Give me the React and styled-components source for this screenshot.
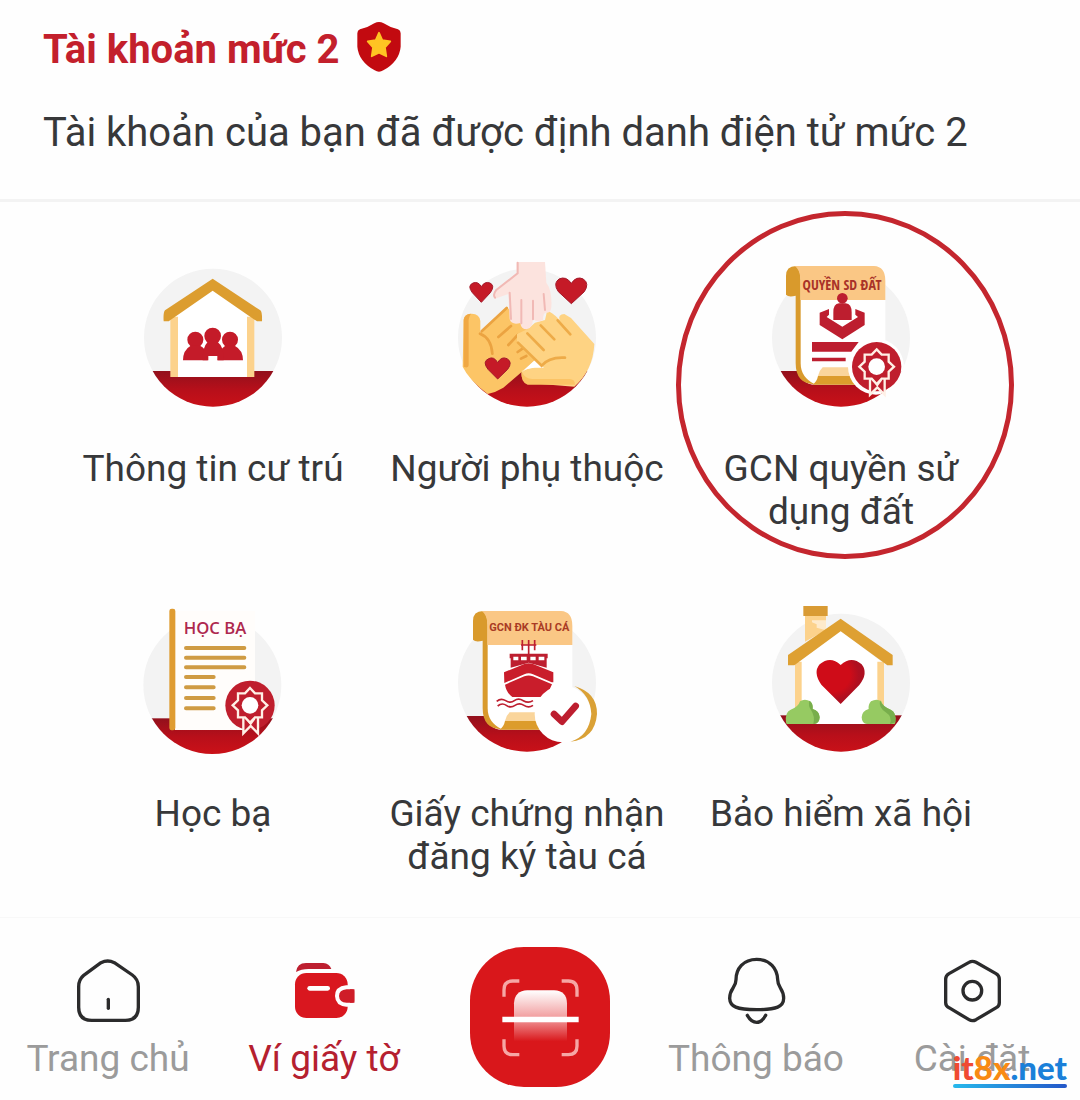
import styled, { createGlobalStyle } from 'styled-components';

const GlobalStyle = createGlobalStyle`
  * {
    box-sizing: border-box;
  }

  body {
    margin: 0;
    background: #fefefe;
    color: #37383a;
    font-family: Roboto, 'Noto Sans', sans-serif;
  }
`;

const Page = styled.div`
  display: flex;
  flex-direction: column;
  overflow: hidden;
`;

const Header = styled.header`
  padding: 22px 43px 42px;
  border-bottom: 3px solid #f3f3f3;
`;

const TitleRow = styled.div`
  display: flex;
  align-items: flex-start;
  gap: 16px;
`;

const Title = styled.h1`
  margin: 0;
  font-weight: 700;
  font-size: 40px;
  line-height: 55px;
  color: #c3202c;
`;

const ShieldIcon = styled.svg`
  width: 46px;
  height: 50px;
`;

const Subtitle = styled.p`
  margin: 32px 0 0;
  font-size: 40px;
  line-height: 48px;
`;

const DocumentGrid = styled.main`
  display: grid;
  grid-template-columns: repeat(3, 1fr);
  row-gap: 62px;
  padding: 48px 82px 39px 56px;
`;

const DocumentLink = styled.a`
  position: relative;
  display: flex;
  flex-direction: column;
  align-items: center;
  gap: 27px;
  min-height: 283px;
  color: inherit;
  text-decoration: none;
`;

const Artwork = styled.svg`
  width: 170px;
  height: 170px;
`;

const DocumentLabel = styled.span`
  max-width: 290px;
  font-size: 37px;
  line-height: 43px;
  text-align: center;
`;

const Highlight = styled.span`
  position: absolute;
  top: -39px;
  left: 50%;
  width: 338px;
  height: 348px;
  margin-left: -165px;
  border: 5px solid #c4262e;
  border-radius: 50%;
  pointer-events: none;
`;

const TabBar = styled.nav`
  position: relative;
  display: grid;
  grid-template-columns: repeat(5, 1fr);
  padding: 29px 0 12px;
  border-top: 1px solid #f8f8f8;
`;

const Tab = styled.a`
  display: flex;
  flex-direction: column;
  align-items: center;
  gap: 10px;
  padding-top: 8px;
  font-size: 37px;
  line-height: 44px;
  color: ${({ $active }) => ($active ? '#b5202f' : '#9b9b9b')};
  text-decoration: none;
  white-space: nowrap;
`;

const TabIcon = styled.svg`
  width: 72px;
  height: 72px;
  fill: none;
  stroke: #2b2b2c;
  stroke-width: 10px;
  stroke-linecap: round;
  stroke-linejoin: round;
`;

const ScanButton = styled.button`
  justify-self: center;
  width: 140px;
  height: 140px;
  padding: 0;
  border: 0;
  border-radius: 54px;
  background: #d9171b;
  cursor: pointer;

  svg {
    display: block;
    width: 100%;
  }
`;

const SiteMark = styled.a`
  position: absolute;
  right: 13px;
  bottom: 11px;
  padding-bottom: 5px;
  font-family: Lato, 'Open Sans', sans-serif;
  font-weight: 900;
  font-size: 33px;
  line-height: 32px;
  color: #1a80d9;
  text-decoration: none;

  &::after {
    content: '';
    position: absolute;
    right: 0;
    bottom: 0;
    left: 0;
    height: 4px;
    border-radius: 2px;
    background: linear-gradient(90deg, #27b9ec, #2457c9);
  }
`;

const Tint = styled.span`
  color: ${({ $color }) => $color};
`;

const ArtText = styled.text`
  font-family: ${({ $family }) => $family};
  font-weight: ${({ $weight }) => $weight || 700};
  font-size: ${({ $size }) => $size}px;
  text-anchor: middle;
`;

const Disc = ({ id, cx = 248, cy = 263, ground = 363 }) => (
  <>
    <defs>
      <clipPath id={`${id}-disc`}>
        <circle cx={cx} cy={cy} r="207" />
      </clipPath>
      <linearGradient id={`${id}-ground`} x1="0" y1="0" x2="0" y2="1">
        <stop offset="0" stopColor="#92101c" />
        <stop offset=".5" stopColor="#b80f1a" />
        <stop offset="1" stopColor="#cc1118" />
      </linearGradient>
    </defs>
    <circle cx={cx} cy={cy} r="207" fill="#f3f3f3" />
    <rect
      x={cx - 210}
      y={ground}
      width="420"
      height={480 - ground}
      fill={`url(#${id}-ground)`}
      clipPath={`url(#${id}-disc)`}
    />
  </>
);

const Rosette = ({ cx, cy }) => (
  <g transform={`translate(${cx} ${cy})`}>
    <circle r="74" fill="#bf1e2d" />
    <g fill="none" stroke="#fff0e6" strokeWidth="7">
      <path fill="#bf1e2d" d="M-20 36V84L2 62 24 84V36" />
      <path strokeWidth="5" d="M-10 40 2 56 14 40" />
      <path
        fill="#bf1e2d"
        d="M0-52 15-36 36-36 36-15 52 0 36 15 36 36 15 36 0 52-15 36-36 36-36 15-52 0-36-15-36-36-15-36Z"
      />
    </g>
    <circle r="25" fill="#fff" />
  </g>
);

const Scroll = () => (
  <>
    <path
      fill="#fff"
      d="M124 70H375L390 104V404H180C150 404 128 384 128 344Z"
    />
    <path
      fill="#d99a2c"
      d="M92 134V78Q92 48 122 48Q136 60 136 90V340Q136 382 178 403Q121 402 121 340V137Q100 143 92 134Z"
    />
    <path fill="#fac785" d="M118 48H356Q390 50 390 92V150H135V88Q134 58 118 48Z" />
    <path fill="#fad59b" d="M202 352H310V378H188Q192 361 202 352Z" />
    <path fill="#dc9c2c" d="M188 378H310L326 404H172Q185 394 188 378Z" />
  </>
);

const ResidenceArt = () => (
  <Artwork viewBox="-7 0 510 510" aria-hidden="true">
    <Disc id="residence" />
    <path fill="#fff" d="M128 200 247 110 364 200V381H128Z" />
    <path fill="#fcd28c" d="M120 200H143V381H120ZM350 200H372V381H350Z" />
    <path
      fill="#dc9d2f"
      d="M247 86 390 181Q396 186 395 214H380L247 122 115 214H100Q98 188 104 181Z"
    />
    <g fill="#c41b29">
      <circle cx="195" cy="269" r="24" />
      <circle cx="299" cy="269" r="24" />
      <path d="M158 331Q158 300 181 287H209Q225 293 232 318V331ZM262 331Q264 300 285 287H313Q338 300 338 331Z" />
      <circle cx="247" cy="258" r="25" />
      <path d="M217 325Q218 290 232 276H262Q280 290 280 325V331H261V318H234V331H217Z" />
    </g>
  </Artwork>
);

const DependantsArt = () => (
  <Artwork viewBox="-9 0 510 510" aria-hidden="true">
    <Disc id="dependants" cx={246} />
    <path
      fill="#fcc566"
      d="M56 208Q58 191 80 191Q104 192 106 213V248L185 171 250 230 270 330 230 366 175 413Q154 426 128 432Q72 390 53 350Z"
    />
    <path fill="#f0a844" d="M56 350V210Q58 192 78 191Q69 204 71 222V346Q70 356 56 350Z" />
    <path
      fill="none"
      stroke="#eba341"
      strokeWidth="8"
      strokeLinecap="round"
      d="M105 251Q139 264 142 311M110 244 185 174M160 261 198 228M190 285 218 255M218 306 238 292M228 326 244 318"
    />
    <path
      fill="#fed383"
      d="M216 252 250 236 270 218 300 210 306 184Q318 183 344 210Q338 194 358 192L378 204 448 282Q444 362 388 410L242 398Q226 386 230 361L270 352 295 351 216 276Z"
    />
    <path fill="#fbc365" d="M230 365Q240 386 262 387H374Q390 388 390 404H248Q226 396 230 365Z" />
    <path fill="#fff" d="M231 366 268 332 297 353H268Q246 354 231 366Z" />
    <path
      fill="none"
      stroke="#eeab48"
      strokeWidth="8"
      strokeLinecap="round"
      d="M219 278 290 347Q312 320 360 323M247 250 296 300M287 226 328 268M338 211 376 253"
    />
    <path
      fill="#fce3de"
      d="M215 36H300L304 98Q322 122 319 171Q318 187 307 188Q294 185 294 210Q277 220 264 207Q263 235 245 238Q228 238 226 219Q200 226 194 208L190 132 150 146Q140 137 151 119L215 68Z"
    />
    <path
      fill="none"
      stroke="#f1b9b5"
      strokeWidth="6"
      strokeLinecap="round"
      d="M218 38V70L153 121Q143 134 150 143M194 128 198 207M229 150V220M264 152V208M296 132 300 180"
    />
    <g fill="#c51a27" stroke="#a3192a" strokeWidth="3">
      <path d="M109 157 82 128Q66 107 84 99 99 93 109 110 119 93 135 99 151 107 136 128Z" />
      <path d="M379 161 340 125Q323 100 342 87 363 77 379 100 394 77 415 87 434 101 418 125Z" />
      <path d="M158 387 129 358Q111 335 131 326 147 318 158 338 169 318 186 326 204 336 188 358Z" />
    </g>
  </Artwork>
);

const LandRightsArt = () => (
  <Artwork viewBox="2 0 510 510" aria-hidden="true">
    <Disc id="land" cx={257} />
    <Scroll />
    <ArtText x="260" y="119" fill="#a93228" $size={42} $family="'Liberation Sans Narrow', 'Open Sans Condensed', Roboto, sans-serif">
      QUYỀN SD ĐẤT
    </ArtText>
    <g fill="#bd1e2f">
      <path d="M193 188 221 177V194L214 201 261 230 308 201 300 194V177L328 188V225L261 268 193 225Z" />
      <path d="M234 210V187Q234 162 251 160H271Q289 162 289 187V210Z" />
      <circle cx="261" cy="145" r="16" />
      <path d="M170 276H310L288 305H170ZM170 323H271V334H170Z" />
    </g>
    <circle cx="362" cy="350" r="84" fill="#fff" clipPath="url(#land-disc)" />
    <Rosette cx={364} cy={350} />
  </Artwork>
);

const SchoolRecordArt = () => (
  <Artwork viewBox="-5 0 510 510" aria-hidden="true">
    <Disc id="school" cx={248} cy={270} ground={370} />
    <path fill="#fffdfb" d="M136 48H376V385L350 405H136Z" />
    <rect x="119" y="41" width="18" height="365" rx="7" fill="#df9c32" />
    <ArtText x="256" y="117" fill="#ae284e" $size={50} $weight={600} $family="'Open Sans', 'Noto Sans', sans-serif">
      HỌC BẠ
    </ArtText>
    <path
      stroke="#cf9b43"
      strokeWidth="12"
      strokeLinecap="round"
      d="M169 159H344M169 188H344M169 217H344M169 246H252M169 277H252M169 309H252M169 340H252"
    />
    <Rosette cx={361} cy={331} />
  </Artwork>
);

const ShipCertificateArt = () => (
  <Artwork viewBox="-9 0 510 510" aria-hidden="true">
    <Disc id="ship" cx={246} />
    <g transform="translate(-8 0)">
      <Scroll />
    </g>
    <ArtText x="253" y="107" fill="#a93b24" $size={33} $family="Roboto, sans-serif">
      GCN ĐK TÀU CÁ
    </ArtText>
    <g fill="none" stroke="#bd1e2f" strokeWidth="5">
      <path d="M232 135V166M251 135V180M269 135V166M228 150H274" />
      <path d="M155 319Q168 308 182 317T208 317 235 317 264 317M158 333Q171 322 184 331T210 331 237 331 264 331" />
    </g>
    <path fill="#bd1e2f" d="M194 176H308V190H305V218L251 203 197 218V190H194Z" />
    <path fill="#fff" d="M205 185H220V196H205ZM228 185H245V196H228ZM256 185H272V196H256ZM281 185H298V196H281Z" />
    <path
      fill="#c91d2b"
      d="M177 232 238 207Q251 203 264 207L325 232V262H320L264 238Q251 232 238 238L178 264ZM180 269 238 244Q251 239 264 244L321 268Q310 290 305 306H202Q184 293 180 269Z"
    />
    <circle cx="354" cy="357" r="85" fill="#fff" />
    <path
      fill="#daa136"
      d="M388 273Q457 293 456 357 450 432 376 440 432 424 439 357 436 300 388 273Z"
    />
    <path
      fill="none"
      stroke="#bd1e2f"
      strokeWidth="20"
      strokeLinecap="round"
      strokeLinejoin="round"
      d="M327 357 351 380 392 333"
    />
  </Artwork>
);

const InsuranceArt = () => (
  <Artwork viewBox="2 0 510 510" aria-hidden="true">
    <Disc id="insurance" cx={257} ground={361} />
    <defs>
      <radialGradient id="heart" cx=".32" cy=".35" r=".75">
        <stop offset=".5" stopColor="#cf0c18" />
        <stop offset=".75" stopColor="#ae0f20" />
      </radialGradient>
    </defs>
    <path fill="#fcd28c" d="M149 62H212V105L149 140Z" />
    <path fill="#feeacb" d="M170 76H212V106L184 98V88L170 82Z" />
    <path fill="#d99b34" d="M144 33H217V63H144Z" />
    <path fill="#fff" d="M130 200 256 106 378 200V387H130Z" />
    <path fill="#fcd28c" d="M119 200H139V350H119ZM366 200H386V350H366Z" />
    <path fill="#dea032" d="M256 71 412 180V211H396L256 109 117 211H98V180Z" />
    <path
      fill="url(#heart)"
      d="M256 327 198 269Q172 233 193 208 225 181 256 210 288 181 319 208 340 235 312 270Z"
    />
    <path fill="#96ca62" d="M92 382Q88 352 106 344 130 335 134 319 148 309 165 319 174 330 172 342 192 347 193 367 192 387 177 387H94Z" />
    <path fill="#78ae4c" d="M162 317Q174 324 172 342 192 347 193 367 192 387 174 387 180 365 167 345 158 332 162 317Z" />
    <path fill="#96ca62" d="M420 382Q424 352 406 344 382 335 378 319 364 309 347 319 338 330 340 342 320 347 319 367 320 387 335 387H418Z" />
    <path fill="#78ae4c" d="M374 316Q380 334 406 344 424 352 420 382L404 387Q411 364 393 353 369 340 374 316Z" />
  </Artwork>
);

const documents = [
  { label: 'Thông tin cư trú', Art: ResidenceArt },
  { label: 'Người phụ thuộc', Art: DependantsArt },
  { label: 'GCN quyền sử dụng đất', Art: LandRightsArt, highlighted: true },
  { label: 'Học bạ', Art: SchoolRecordArt },
  { label: 'Giấy chứng nhận đăng ký tàu cá', Art: ShipCertificateArt },
  { label: 'Bảo hiểm xã hội', Art: InsuranceArt },
];

const App = () => (
  <Page>
    <GlobalStyle />
    <Header>
      <TitleRow>
        <Title>Tài khoản mức 2</Title>
        <ShieldIcon viewBox="1030 66 138 150" aria-hidden="true">
          <path
            fill="#c20a10"
            d="M1085 70Q1099 62 1113 70 1131 82 1156 88 1164 91 1164 100V140Q1160 184 1112 211 1099 219 1086 211 1038 184 1034 140V100Q1034 91 1042 88 1067 82 1085 70Z"
          />
          <path
            fill="#ffc423"
            stroke="#ffc423"
            strokeWidth="5"
            strokeLinejoin="round"
            d="M1099 98 1109 120 1133 124 1117 142 1121 169 1099 158 1077 169 1081 142 1065 124 1089 120Z"
          />
        </ShieldIcon>
      </TitleRow>
      <Subtitle>Tài khoản của bạn đã được định danh điện tử mức 2</Subtitle>
    </Header>

    <DocumentGrid>
      {documents.map(({ label, Art, highlighted }) => (
        <DocumentLink key={label} href="#">
          <Art />
          <DocumentLabel>{label}</DocumentLabel>
          {highlighted && <Highlight />}
        </DocumentLink>
      ))}
    </DocumentGrid>

    <TabBar>
      <Tab href="#">
        <TabIcon viewBox="216 165 216 216" aria-hidden="true">
          <path d="M303 188Q323 178 343 188L397 225Q415 238 415 260V322Q415 361 376 361H275Q236 361 236 322V260Q236 238 251 226Z" />
          <path d="M325 298V325" />
        </TabIcon>
        Trang chủ
      </Tab>
      <Tab href="#" $active>
        <TabIcon viewBox="864 165 216 216" aria-hidden="true">
          <path
            fill="#bd1f30"
            stroke="none"
            d="M888 216Q891 189 918 189H970Q988 190 994 207H925Q904 207 888 216Z"
          />
          <rect x="885" y="219" width="158" height="135" rx="34" fill="#d9171f" stroke="none" />
          <path stroke="#fff" strokeWidth="14" d="M929 265H983" />
          <path
            fill="#cf1d28"
            stroke="#fefefe"
            strokeWidth="12"
            d="M1070 262H1039Q1011 265 1011 288 1012 312 1039 314H1070Z"
          />
          <path fill="#cf1d28" stroke="none" d="M1050 268H1056Q1064 268 1064 276V300Q1064 308 1056 308H1050Z" />
          <path fill="#fefefe" stroke="none" d="M1064 250H1082V324H1064Z" />
        </TabIcon>
        Ví giấy tờ
      </Tab>
      <ScanButton type="button" aria-label="Quét mã">
        <svg viewBox="120 141 420 420" aria-hidden="true">
          <defs>
            <linearGradient id="scan" x1="0" y1="0" x2="0" y2="1">
              <stop offset="0" stopColor="#fff" />
              <stop offset=".55" stopColor="#f19a9b" />
              <stop offset="1" stopColor="#d9171b" />
            </linearGradient>
          </defs>
          <path
            fill="none"
            stroke="#f6a7a5"
            strokeWidth="10"
            d="M268 243H248Q222 243 222 270V290M395 243H415Q441 243 441 270V290M268 464H248Q222 464 222 438V418M395 464H415Q441 464 441 438V418"
          />
          <path fill="url(#scan)" d="M252 424V310Q254 272 292 271H372Q410 272 411 310V424Z" />
          <path fill="#fff" d="M217 350H446V367H217Z" />
        </svg>
      </ScanButton>
      <Tab href="#">
        <TabIcon viewBox="210 165 216 216" aria-hidden="true">
          <path d="M320 178C280 178 258 206 258 239 258 265 239 264 239 295 240 320 260 329 320 329S401 320 401 295C401 264 383 265 383 239 382 206 360 178 320 178Z" />
          <path d="M292 346Q304 367 320 367T347 346" />
        </TabIcon>
        Thông báo
      </Tab>
      <Tab href="#">
        <TabIcon viewBox="858 165 216 216" aria-hidden="true">
          <path d="M957 187Q967 181 978 187L1038 221Q1048 227 1048 237V308Q1048 318 1039 323L978 359Q967 365 957 359L897 323Q887 318 887 308V237Q887 227 897 221Z" />
          <circle cx="967" cy="272" r="28" />
        </TabIcon>
        Cài đặt
      </Tab>
      <SiteMark href="#">
        <Tint $color="#f04a32">it</Tint>
        <Tint $color="#f88a13">8x</Tint>.net
      </SiteMark>
    </TabBar>
  </Page>
);

export default App;
